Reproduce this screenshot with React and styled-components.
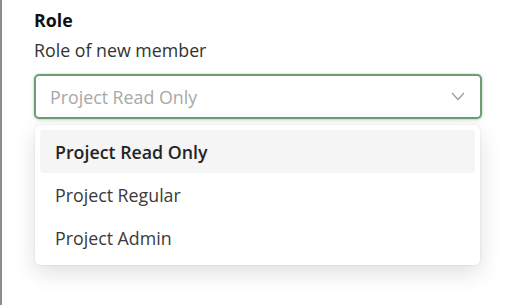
import React from 'react';
import styled, { createGlobalStyle } from 'styled-components';

const GlobalStyle = createGlobalStyle`
  html, body {
    margin: 0;
    padding: 0;
    background: #fff;
  }
  body {
    font-family: 'Open Sans', 'Noto Sans', sans-serif;
  }
`;

const Page = styled.div`
  height: 305px;
  border-left: 2px solid #8c8c8c;
  padding: 7px 0 0 32px;
  box-sizing: border-box;
`;

const Field = styled.div`
  position: relative;
  width: 448px;
  display: flex;
  flex-direction: column;
`;

const Label = styled.div`
  font-size: 17.8px;
  font-weight: 700;
  color: #111;
  line-height: 26px;
`;

const Hint = styled.div`
  font-size: 17.8px;
  color: #333;
  line-height: 26px;
  margin-top: 4px;
`;

const Select = styled.div`
  margin-top: 11px;
  height: 45px;
  box-sizing: border-box;
  border: 2px solid #6c9e70;
  border-radius: 5px;
  box-shadow: 0 0 0 1px rgba(0, 0, 0, 0.05), 0 1px 4px rgba(0, 0, 0, 0.14);
  display: flex;
  align-items: center;
  justify-content: space-between;
  padding: 0 15px 0 14px;
  background: #fff;
`;

const Placeholder = styled.span`
  font-size: 17.8px;
  color: #a8a8a8;
`;

const Menu = styled.div`
  position: absolute;
  top: 118px;
  left: 1px;
  width: 445px;
  box-sizing: border-box;
  padding: 5px 5px 6px;
  background: #fff;
  border-radius: 5px;
  box-shadow: 0 0 2px rgba(0, 0, 0, 0.12), 0 8px 22px rgba(0, 0, 0, 0.13);
`;

const Option = styled.div`
  height: 43px;
  display: flex;
  align-items: center;
  padding-left: 15px;
  border-radius: 4px;
  font-size: 17.8px;
  color: ${({ selected }) => (selected ? '#242424' : '#3a3a3a')};
  font-weight: ${({ selected }) => (selected ? 600 : 400)};
  background: ${({ selected }) => (selected ? '#f5f5f5' : 'transparent')};
`;

const Chevron = () => (
  <svg width="14" height="9" viewBox="0 0 14 9" fill="none">
    <path d="M1 1l6 6.5L13 1" stroke="#9a9a9a" strokeWidth="1.2" />
  </svg>
);

const options = ['Project Read Only', 'Project Regular', 'Project Admin'];

export default function App() {
  return (
    <>
      <GlobalStyle />
      <Page>
        <Field>
          <Label>Role</Label>
          <Hint>Role of new member</Hint>
          <Select>
            <Placeholder>Project Read Only</Placeholder>
            <Chevron />
          </Select>
          <Menu>
            {options.map((o, i) => (
              <Option key={o} selected={i === 0}>
                {o}
              </Option>
            ))}
          </Menu>
        </Field>
      </Page>
    </>
  );
}
